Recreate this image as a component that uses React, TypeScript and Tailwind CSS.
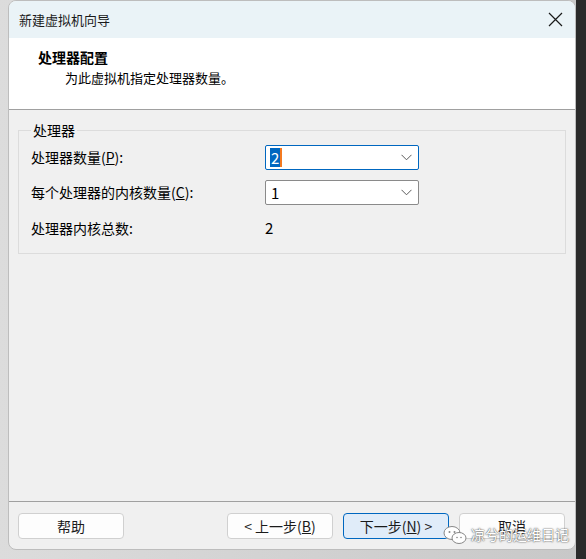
import React from 'react'

const font = { fontFamily: '"Microsoft YaHei UI", "Noto Sans CJK SC", "Noto Sans", sans-serif' }

function Chevron() {
    return (
        <svg width="11" height="7" viewBox="0 0 11 7" className="text-[#5a5a5a]">
            <path d="M0.5 0.8 L5.5 5.8 L10.5 0.8" fill="none" stroke="currentColor" strokeWidth="1" />
        </svg>
    )
}

function Select({ value, focused }: { value: string, focused?: boolean }) {
    return (
        <div className={(focused ? "border-[#0067c0]" : "border-[#8a8a8a]") + " w-[154px] h-[25px] bg-white border rounded-[2px] flex items-center pl-[4px] pr-[6px]"}>
            <span className={(focused ? "bg-[#0067c0] text-white border-r-[2px] border-[#f47a20]" : "text-[#000]") + " text-[15px] leading-[19px] px-[1px]"}>{value}</span>
            <div className="ml-auto"><Chevron /></div>
        </div>
    )
}

function Btn({ label, primary }: { label: React.ReactNode, primary?: boolean }) {
    return (
        <div className={(primary ? "bg-[#e0ecf9] border-[#0067c0]" : "bg-[#fdfdfd] border-[#d0d0d0]") + " w-[106px] h-[26px] border rounded-[4px] flex items-center justify-center text-[14px] text-[#1a1a1a]"}>
            {label}
        </div>
    )
}

export default function App() {
    return (
        <div className="w-[586px] h-[559px] flex bg-[#2a2a2a] overflow-hidden" style={font}>
            <div className="w-[576px] flex flex-col bg-gradient-to-r from-[#dcdcdc] to-[#c8c8c8]">
                <div className="ml-[8px] w-[568px] h-[550px] flex flex-col rounded-[8px] overflow-hidden border border-[#bdbdbd] bg-[#f0f0f0] relative">
                    {/* title bar */}
                    <div className="h-[37px] bg-[#eaf3f7] flex items-center pl-[10px] pr-[12px]">
                        <span className="text-[13px] text-[#1a1a1a]">新建虚拟机向导</span>
                        <svg className="ml-auto" width="15" height="15" viewBox="0 0 15 15">
                            <path d="M1 1 L14 14 M14 1 L1 14" stroke="#1a1a1a" strokeWidth="1.2" />
                        </svg>
                    </div>

                    {/* header */}
                    <div className="h-[72px] bg-white border-b border-[#a0a0a0] pl-[29px] pt-[8px]">
                        <div className="text-[14px] font-bold text-[#000] leading-[22px]">处理器配置</div>
                        <div className="text-[13px] text-[#000] leading-[20px] pl-[27px]">为此虚拟机指定处理器数量。</div>
                    </div>

                    {/* content */}
                    <div className="flex-1 px-[9px] pt-[10px]">
                        <fieldset className="border border-[#dcdcdc] h-[134px] pl-[12px] pt-[3px]">
                            <legend className="text-[14px] text-[#000] px-[2px] leading-[20px]">处理器</legend>
                            <div className="flex items-center h-[25px] mt-[2px]">
                                <span className="w-[234px] text-[14px] text-[#000]">处理器数量(<span className="underline">P</span>):</span>
                                <Select value="2" focused />
                            </div>
                            <div className="flex items-center h-[25px] mt-[10px]">
                                <span className="w-[234px] text-[14px] text-[#000]">每个处理器的内核数量(<span className="underline">C</span>):</span>
                                <Select value="1" />
                            </div>
                            <div className="flex items-center h-[25px] mt-[11px]">
                                <span className="w-[234px] text-[14px] text-[#000]">处理器内核总数:</span>
                                <span className="text-[15px] text-[#000]">2</span>
                            </div>
                        </fieldset>
                    </div>

                    {/* footer */}
                    <div className="h-[48px] border-t border-[#a0a0a0] flex items-start pt-[11px] pl-[9px] pr-[10px]">
                        <Btn label="帮助" />
                        <div className="ml-auto flex gap-[10px]">
                            <Btn label={<>&lt; 上一步(<span className="underline">B</span>)</>} />
                            <Btn label={<>下一步(<span className="underline">N</span>) &gt;</>} primary />
                            <Btn label="取消" />
                        </div>
                    </div>

                    {/* watermark */}
                    <div className="absolute left-[434px] top-[523px] flex items-center gap-[4px] pointer-events-none">
                        <svg width="24" height="20" viewBox="0 0 24 20">
                            <ellipse cx="9" cy="8" rx="8" ry="6.5" fill="white" stroke="#888" strokeWidth="1" />
                            <ellipse cx="16" cy="13" rx="7" ry="5.5" fill="white" stroke="#888" strokeWidth="1" />
                            <circle cx="6.5" cy="7" r="1" fill="#888" />
                            <circle cx="11.5" cy="7" r="1" fill="#888" />
                            <circle cx="14" cy="12.5" r="0.8" fill="#888" />
                            <circle cx="18" cy="12.5" r="0.8" fill="#888" />
                        </svg>
                        <span className="text-[14px] text-white [text-shadow:0_0_2px_#555,0_0_1px_#555]">凉兮的运维日记</span>
                    </div>
                </div>
                <div className="flex-1" />
            </div>
        </div>
    )
}
